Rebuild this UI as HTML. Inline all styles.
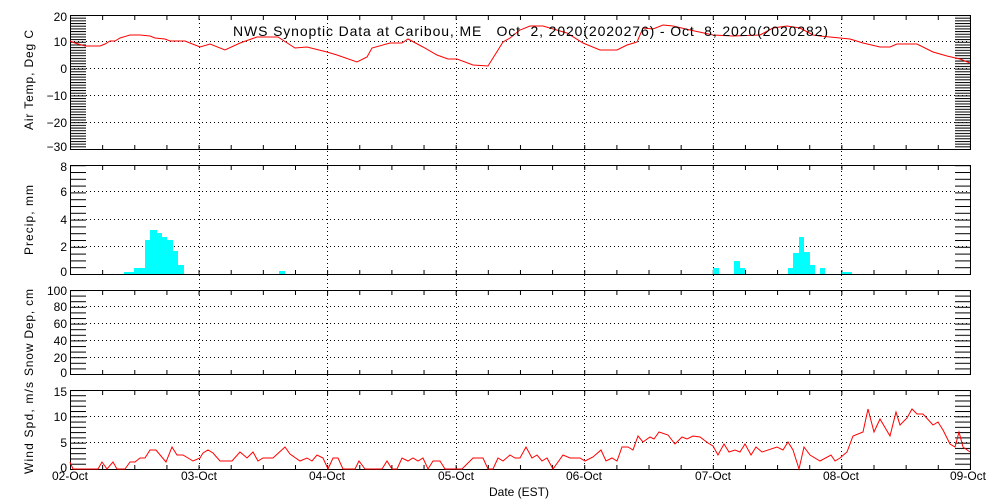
<!DOCTYPE html>
<html><head><meta charset="utf-8"><style>
html,body{margin:0;padding:0;background:#fff;width:1000px;height:500px;overflow:hidden}
svg{display:block}
text{font-family:"Liberation Sans",sans-serif;font-size:12px;fill:#000}
</style></head><body>
<svg width="1000" height="500" viewBox="0 0 1000 500" xmlns="http://www.w3.org/2000/svg">
<defs>
<pattern id="pt" patternUnits="userSpaceOnUse" x="0" y="149" width="20" height="2.68"><rect x="0" y="0" width="20" height="1" fill="#000"/></pattern>
<pattern id="pp" patternUnits="userSpaceOnUse" x="0" y="274" width="20" height="6.8"><rect x="0" y="0" width="20" height="1" fill="#000"/></pattern>
<pattern id="ps" patternUnits="userSpaceOnUse" x="0" y="374" width="20" height="5.6"><rect x="0" y="0" width="20" height="1" fill="#000"/></pattern>
<pattern id="pw" patternUnits="userSpaceOnUse" x="0" y="469" width="20" height="5.27"><rect x="0" y="0" width="20" height="1" fill="#000"/></pattern>
<pattern id="px" patternUnits="userSpaceOnUse" x="70" y="0" width="32.14" height="10"><rect x="0" y="0" width="1" height="10" fill="#000"/></pattern>
</defs>

<g stroke="#000" stroke-width="1" fill="none" shape-rendering="crispEdges">
<rect x="70.5" y="15.5" width="900" height="134"/>
<rect x="70.5" y="165.5" width="900" height="109"/>
<rect x="70.5" y="290.5" width="900" height="84"/>
<rect x="70.5" y="390.5" width="900" height="79"/>
</g>
<g shape-rendering="crispEdges">
<rect x="71" y="16" width="15" height="133" fill="url(#pt)"/><rect x="955" y="16" width="15" height="133" fill="url(#pt)"/>
<rect x="71" y="166" width="15" height="108" fill="url(#pp)"/><rect x="955" y="166" width="15" height="108" fill="url(#pp)"/>
<rect x="71" y="291" width="15" height="83" fill="url(#ps)"/><rect x="955" y="291" width="15" height="83" fill="url(#ps)"/>
<rect x="71" y="391" width="15" height="78" fill="url(#pw)"/><rect x="955" y="391" width="15" height="78" fill="url(#pw)"/>
<rect x="70" y="16" width="900" height="4" fill="url(#px)"/><rect x="70" y="145" width="900" height="4" fill="url(#px)"/>
<rect x="70" y="166" width="900" height="4" fill="url(#px)"/><rect x="70" y="270" width="900" height="4" fill="url(#px)"/>
<rect x="70" y="291" width="900" height="4" fill="url(#px)"/><rect x="70" y="370" width="900" height="4" fill="url(#px)"/>
<rect x="70" y="391" width="900" height="4" fill="url(#px)"/><rect x="70" y="465" width="900" height="4" fill="url(#px)"/>
</g>
<g stroke="#000" stroke-width="1" stroke-dasharray="1,3" shape-rendering="crispEdges">
<line x1="70" y1="41.5" x2="970" y2="41.5"/><line x1="70" y1="68.5" x2="970" y2="68.5"/><line x1="70" y1="95.5" x2="970" y2="95.5"/><line x1="70" y1="122.5" x2="970" y2="122.5"/>
<line x1="70" y1="191.5" x2="970" y2="191.5"/><line x1="70" y1="219.5" x2="970" y2="219.5"/><line x1="70" y1="246.5" x2="970" y2="246.5"/>
<line x1="70" y1="306.5" x2="970" y2="306.5"/><line x1="70" y1="323.5" x2="970" y2="323.5"/><line x1="70" y1="340.5" x2="970" y2="340.5"/><line x1="70" y1="357.5" x2="970" y2="357.5"/>
<line x1="70" y1="416.5" x2="970" y2="416.5"/><line x1="70" y1="442.5" x2="970" y2="442.5"/>
<line x1="199.5" y1="15" x2="199.5" y2="469"/><line x1="327.5" y1="15" x2="327.5" y2="469"/><line x1="456.5" y1="15" x2="456.5" y2="469"/>
<line x1="584.5" y1="15" x2="584.5" y2="469"/><line x1="713.5" y1="15" x2="713.5" y2="469"/><line x1="841.5" y1="15" x2="841.5" y2="469"/>
</g>
<g fill="#00ffff" shape-rendering="crispEdges">
<rect x="124" y="272" width="10" height="2"/><rect x="134" y="268" width="11" height="6"/><rect x="145" y="240" width="5" height="34"/>
<rect x="150" y="230" width="7" height="44"/><rect x="157" y="233" width="5" height="41"/><rect x="162" y="237" width="5" height="37"/>
<rect x="167" y="240" width="6" height="34"/><rect x="173" y="251" width="5" height="23"/><rect x="178" y="265" width="6" height="9"/>
<rect x="279" y="271" width="6" height="3"/>
<rect x="713" y="268" width="6" height="6"/><rect x="734" y="261" width="6" height="13"/><rect x="740" y="268" width="5" height="6"/>
<rect x="788" y="268" width="5" height="6"/><rect x="793" y="253" width="6" height="21"/><rect x="799" y="237" width="5" height="37"/>
<rect x="804" y="252" width="6" height="22"/><rect x="810" y="265" width="5" height="9"/><rect x="820" y="268" width="5" height="6"/>
<rect x="842" y="272" width="10" height="2"/>
</g>
<polyline fill="none" stroke="#ff0000" stroke-width="1" points="70,41 75,43 85,46 100,46 105,44 110,41 115,41 120,38 130,35 140,35 150,36 155,38 165,39 170,41 185,41 195,45 200,47 210,44 225,50 240,43 257,37 278,37 295,48 307,47 327,52 337,55 357,62 367,57 372,48 390,43 402,43 408,39 423,47 437,55 448,59 457,59 473,65 488,66 503,42 510,38 520,30 530,26 543,26 567,33 583,43 600,50 617,50 627,45 637,42 643,28 653,29 663,25 673,26 690,30 713,35 733,36 760,35 773,28 787,26 800,28 813,35 820,36 840,38 850,39 863,43 880,47 890,47 897,44 917,44 933,52 947,56 960,59 970,63"/>
<polyline fill="none" stroke="#ff0000" stroke-width="1" points="70,462 73,469 98,469 102,462 107,469 113,462 117,469 125,469 130,462 135,462 140,458 145,458 150,450 156,450 166,462 172,447 177,455 183,455 193,461 200,458 203,453 208,450 213,453 220,461 232,461 240,452 247,458 253,452 258,461 263,458 273,458 285,447 290,454 300,461 307,458 312,461 317,455 323,458 328,469 333,458 338,458 343,469 355,469 359,461 365,469 382,469 387,461 392,469 397,469 402,458 408,461 413,458 418,461 423,458 428,469 433,461 440,461 445,469 462,469 473,458 483,458 488,469 493,469 498,458 503,461 510,455 515,458 520,458 526,447 532,458 537,455 542,461 547,458 553,469 563,455 570,458 580,458 585,461 593,457 601,450 606,461 612,458 617,461 622,447 628,447 633,450 638,436 643,442 650,437 654,439 659,432 668,435 675,444 682,437 687,439 693,436 700,437 708,443 713,446 718,455 724,444 729,452 735,450 740,452 745,444 751,455 756,447 762,452 777,447 783,450 788,442 793,450 799,469 804,447 810,455 820,461 831,455 835,461 840,458 847,452 853,436 863,432 868,409 874,432 880,419 890,436 896,412 900,425 907,418 912,409 917,414 923,414 933,425 938,422 943,430 950,444 955,447 959,432 963,447 970,452"/>
<text x="233" y="36" style="font-size:14px" textLength="595" lengthAdjust="spacing" xml:space="preserve">NWS Synoptic Data at Caribou, ME   Oct  2, 2020(2020276) - Oct  8, 2020(2020282)</text>
<g text-anchor="end" style="font-size:13px">
<text x="67" y="21">20</text><text x="67" y="46">10</text><text x="67" y="73">0</text><text x="67" y="100">−10</text><text x="67" y="127">−20</text><text x="67" y="151">−30</text>
<text x="67" y="171">8</text><text x="67" y="196">6</text><text x="67" y="224">4</text><text x="67" y="251">2</text><text x="67" y="276">0</text>
<text x="67" y="295">100</text><text x="67" y="311">80</text><text x="67" y="328">60</text><text x="67" y="345">40</text><text x="67" y="362">20</text><text x="67" y="377">0</text>
<text x="67" y="396">15</text><text x="67" y="421">10</text><text x="67" y="447">5</text><text x="67" y="472">0</text>
</g>
<g style="font-size:13px">
<text transform="translate(33,130) rotate(-90)" textLength="100" lengthAdjust="spacing">Air Temp, Deg C</text>
<text transform="translate(33,255) rotate(-90)" textLength="70" lengthAdjust="spacing">Precip, mm</text>
<text transform="translate(33,376) rotate(-90)" textLength="87" lengthAdjust="spacing">Snow Dep, cm</text>
<text transform="translate(33,474) rotate(-90)" textLength="92" lengthAdjust="spacing">Wind Spd, m/s</text>
</g>
<g text-anchor="middle" style="font-size:12.5px">
<text x="70" y="480">02-Oct</text><text x="199" y="480">03-Oct</text><text x="327" y="480">04-Oct</text><text x="456" y="480">05-Oct</text>
<text x="584" y="480">06-Oct</text><text x="713" y="480">07-Oct</text><text x="841" y="480">08-Oct</text><text x="968" y="480">09-Oct</text>
<text x="519" y="496">Date (EST)</text>
</g>
</svg>
</body></html>
